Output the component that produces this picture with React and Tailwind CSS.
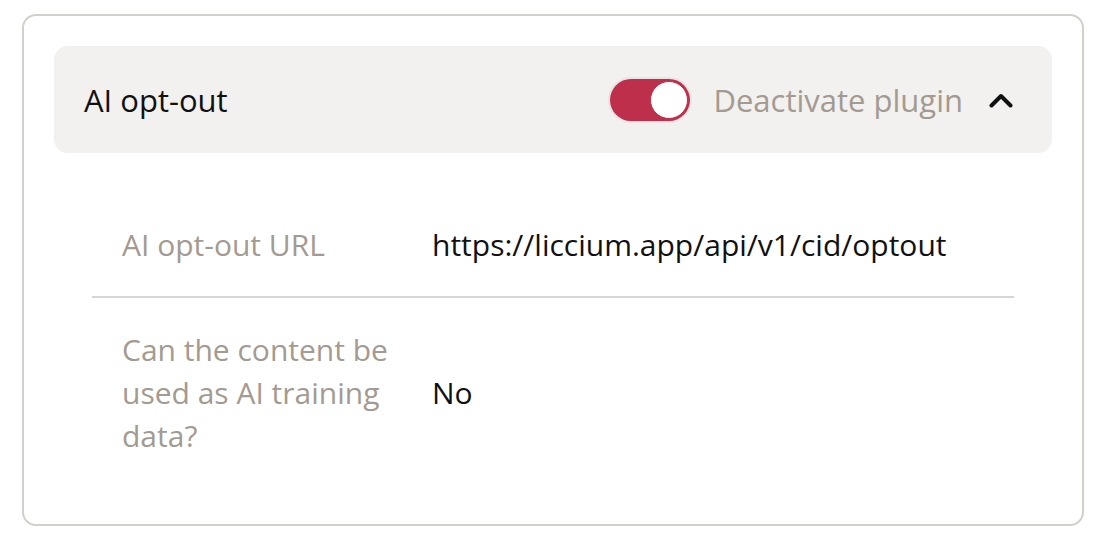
import React from 'react';

const rows = [
  { label: 'AI opt-out URL', value: 'https://liccium.app/api/v1/cid/optout' },
  { label: 'Can the content be used as AI training data?', value: 'No' },
];

export default function App() {
  return (
    <div className="min-h-[546px] w-[1096px] bg-white pl-[22px] pt-[14px] font-['Open_Sans',sans-serif]">
      <div className="w-[1062px] h-[512px] rounded-[14px] border-2 border-[#d3cfcb] p-[30px]">
        {/* header */}
        <div className="flex h-[107px] items-center justify-between rounded-[14px] bg-[#f2f1ef] pl-[30px] pr-[39px]">
          <h2 className="text-[31px] leading-[40px] text-[#111]">AI opt-out</h2>
          <div className="flex items-center">
            <button className="relative h-[42px] w-[80px] rounded-full bg-[#be2f4b] ring-2 ring-[#e8e4e4]">
              <span className="absolute right-[2px] top-[2px] h-[38px] w-[38px] rounded-full border border-[#be2f4b] bg-white" />
            </button>
            <span className="ml-[23px] text-[31px] leading-[40px] text-[#a39a91]">Deactivate plugin</span>
            <svg className="ml-[26px]" width="24" height="16" viewBox="0 0 24 16" fill="none">
              <path d="M2.5 13.5 L12 4 L21.5 13.5" stroke="#111" strokeWidth="4" strokeLinecap="round" strokeLinejoin="round" />
            </svg>
          </div>
        </div>

        {/* details */}
        <div className="mt-[40px] px-[38px]">
          {rows.map((r, i) => (
            <div
              key={r.label}
              className={`flex items-center gap-[30px] py-[30px] pl-[30px] ${i === 0 ? 'border-b-2 border-[#d9d5d1]' : ''}`}
            >
              <div className="w-[280px] text-[30px] leading-[43px] text-[#a39a91]">{r.label}</div>
              <div className="text-[30px] leading-[43px] text-[#111]">{r.value}</div>
            </div>
          ))}
        </div>
      </div>
    </div>
  );
}
